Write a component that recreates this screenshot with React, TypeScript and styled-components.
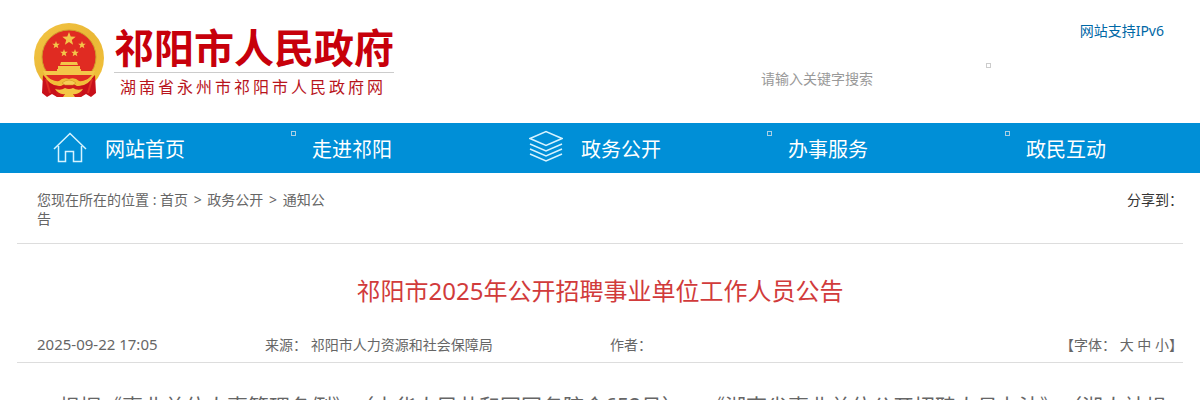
import React from "react";
import styled, { createGlobalStyle } from "styled-components";

const GlobalStyle = createGlobalStyle`
  * { box-sizing: border-box; }
  body {
    margin: 0;
    background: #fff;
    color: #666;
    font: 14px/19px "Noto Sans", "Noto Sans CJK SC", sans-serif;
  }
  a { color: inherit; text-decoration: none; }
  h1, p { margin: 0; padding: 0; }
  html { height: 100%; }
  body, #root { height: 100%; overflow: hidden; }
`;

const Header = styled.header`
  display: flex;
  justify-content: space-between;
  height: 123px;
  padding: 22px 36px 0 34px;
`;

const Brand = styled.a`
  display: flex;
  align-items: flex-start;
  gap: 10px;
`;

const BrandText = styled.span`
  display: flex;
  flex-direction: column;
  color: #c7000b;
`;

const BrandName = styled.strong`
  padding-top: 2px;
  border-bottom: 1px solid #ccc;
  font-size: 40px;
  font-weight: 700;
  line-height: 48px;
`;

const BrandSub = styled.span`
  padding-left: 6px;
  font-size: 16px;
  line-height: 28px;
  letter-spacing: 3px;
  color: #b8141c;
`;

const Tools = styled.div`
  display: flex;
  flex-direction: column;
  width: 404px;
`;

const Ipv6Link = styled.a`
  align-self: flex-end;
  line-height: 18px;
  color: #0068a6;
`;

const SearchForm = styled.form`
  display: flex;
  gap: 6px;
  margin-top: 23px;
`;

const SearchInput = styled.input`
  width: 220px;
  height: 30px;
  padding: 0 1px;
  border: 0;
  outline: 0;
  background: transparent;
  font: inherit;
  &::placeholder { color: #999; opacity: 1; }
`;

const SearchButton = styled.button`
  display: flex;
  width: 50px;
  height: 30px;
  padding: 0;
  border: 0;
  background: transparent;
`;

const EmptyBox = styled.span<{ $tone: string }>`
  width: 5px;
  height: 5px;
  border: 1px solid ${(p) => p.$tone};
`;

const Nav = styled.nav`
  display: grid;
  grid-template-columns: repeat(5, 238px);
  height: 50px;
  overflow: hidden;
  background: #008fd7;
  color: #fff;
`;

const NavLink = styled.a<{ $wide: boolean }>`
  display: flex;
  gap: ${(p) => (p.$wide ? 18 : 16)}px;
  padding-left: 53px;
  font-size: 20px;
  line-height: 54px;
`;

const NavIcon = styled.svg`
  width: 34px;
  height: 50px;
  fill: none;
  stroke: #d5f3ff;
  stroke-width: 1.5;
`;

const NavBox = styled(EmptyBox)`
  margin-top: 8px;
`;

const Page = styled.main`
  margin: 0 17px;
`;

const CrumbBar = styled.div`
  display: flex;
  justify-content: space-between;
  height: 71px;
  padding: 17px 0 0 20px;
  border-bottom: 1px solid #ddd;
`;

const Crumbs = styled.nav`
  width: 300px;
`;

const Separator = styled.span`
  margin: 0 2px;
`;

const Share = styled.span`
  color: #333;
`;

const Title = styled.h1`
  padding: 29px 0 26px;
  font-size: 24px;
  font-weight: 400;
  line-height: 36px;
  text-align: center;
  color: #d13b3b;
`;

const Meta = styled.div`
  display: grid;
  grid-template-columns: 228px 345px 1fr auto;
  height: 28px;
  padding-left: 20px;
  border-bottom: 1px solid #ddd;
`;

const PublishTime = styled.time`
  font-size: 15px;
`;

const SizeButton = styled.button`
  padding: 0;
  border: 0;
  background: none;
  color: inherit;
  font: inherit;
`;

const Article = styled.p`
  padding-top: 22px;
  font-size: 21px;
  line-height: 42px;
  text-indent: 2em;
  text-spacing-trim: space-all;
`;

const star = (cx: number, cy: number, r: number) =>
  Array.from({ length: 10 }, (_, i) => {
    const a = (Math.PI * i) / 5 - Math.PI / 2;
    const d = i % 2 ? r * 0.42 : r;
    return `${cx + d * Math.cos(a)},${cy + d * Math.sin(a)}`;
  }).join(" ");

const Emblem = () => (
  <svg width="70" height="76" viewBox="0 0 70 76" aria-hidden="true">
    <defs>
      <linearGradient id="gold" x1="0" y1="0" x2="1" y2="1">
        <stop offset="0" stopColor="#f3c544" />
        <stop offset="0.5" stopColor="#eab836" />
        <stop offset="1" stopColor="#f3c23a" />
      </linearGradient>
    </defs>
    <circle cx="35" cy="36" r="35" fill="url(#gold)" />
    <circle cx="35" cy="35" r="27" fill="#e02b22" stroke="#cf9d2c" />
    <g fill="#f3c649">
      <polygon points={star(35, 17, 7)} />
      <polygon points={star(22, 23, 4)} />
      <polygon points={star(48, 23, 4)} />
      <polygon points={star(30, 31, 4)} />
      <polygon points={star(41, 31, 4)} />
      <path d="M27 40h16l1 3h-18zM24 44h22v3h1v3H23v-3h1zM9 49h52l-2 4H11z" />
    </g>
    <path d="M12 53h46l-8 8H20z" fill="#e02b22" />
    <path d="M9 53Q17 62 27 64L23 75L18 72L13 75L8 71Z" fill="#c8101a" />
    <path d="M61 53Q53 62 43 64L47 75L52 72L57 75L62 71Z" fill="#c8101a" />
    <path d="M12 57L16 71M58 57L54 71" stroke="#df2c23" strokeWidth="2" />
    <path d="M21 66Q35 56 49 66L47 75H23Z" fill="#cf1a1c" />
    <path
      d="M10 53Q19 60 25 59Q29 55 35 57Q41 55 45 59Q51 60 60 53Q54 65 43 64Q35 58 27 64Q16 65 10 53Z"
      fill="#f1bd39"
    />
    <path d="M28 61Q35 55 42 61L39 63H31Z" fill="#f7ce55" stroke="#c98b1b" strokeWidth="0.5" />
    <path d="M21 67Q27 69 31 66Q35 68 39 66Q43 69 49 67Q45 73 39 72L41 75H29L31 72Q25 73 21 67Z" fill="#f4c645" />
  </svg>
);

const HomeIcon = () => (
  <NavIcon viewBox="0 0 34 50" aria-hidden="true">
    <path d="M1 26L17 10.500L33 26M5.500 23V38.500H12.500V28.500H20.500V38.500H28.500V23" />
  </NavIcon>
);

const LayersIcon = () => (
  <NavIcon viewBox="0 0 34 50" aria-hidden="true">
    <path d="M1 15.500L17 8.500L33 15.500L17 22.500ZM1 21L17 28L33 21M1 26L17 33L33 26M1 31L17 38L33 31" />
  </NavIcon>
);

const navItems = [
  { label: "网站首页", icon: <HomeIcon /> },
  { label: "走进祁阳" },
  { label: "政务公开", icon: <LayersIcon /> },
  { label: "办事服务" },
  { label: "政民互动" },
];

export default function App() {
  return (
    <>
      <GlobalStyle />
      <Header>
        <Brand href="#">
          <Emblem />
          <BrandText>
            <BrandName>祁阳市人民政府</BrandName>
            <BrandSub>湖南省永州市祁阳市人民政府网</BrandSub>
          </BrandText>
        </Brand>
        <Tools>
          <Ipv6Link href="#">网站支持IPv6</Ipv6Link>
          <SearchForm>
            <SearchInput aria-label="搜索" placeholder="请输入关键字搜索" />
            <SearchButton type="button" aria-label="搜索">
              <EmptyBox $tone="#ccc" />
            </SearchButton>
          </SearchForm>
        </Tools>
      </Header>
      <Nav>
        {navItems.map((item) => (
          <NavLink key={item.label} href="#" $wide={!!item.icon}>
            {item.icon ?? <NavBox $tone="#a9cfe4" />}
            {item.label}
          </NavLink>
        ))}
      </Nav>
      <Page>
        <CrumbBar>
          <Crumbs>
            您现在所在的位置 : <a href="#">首页</a> <Separator>&gt;</Separator> <a href="#">政务公开</a>{" "}
            <Separator>&gt;</Separator> <a href="#">通知公告</a>
          </Crumbs>
          <Share>分享到：</Share>
        </CrumbBar>
        <Title>祁阳市2025年公开招聘事业单位工作人员公告</Title>
        <Meta>
          <PublishTime>2025-09-22 17:05</PublishTime>
          <span>来源： 祁阳市人力资源和社会保障局</span>
          <span>作者：</span>
          <span>
            【字体： <SizeButton>大</SizeButton> <SizeButton>中</SizeButton> <SizeButton>小</SizeButton>】
          </span>
        </Meta>
        <Article>
          根据《事业单位人事管理条例》（中华人民共和国国务院令652号）、《湖南省事业单位公开招聘人员办法》（湘人社规〔2019〕1号）等有关规定
        </Article>
      </Page>
    </>
  );
}
